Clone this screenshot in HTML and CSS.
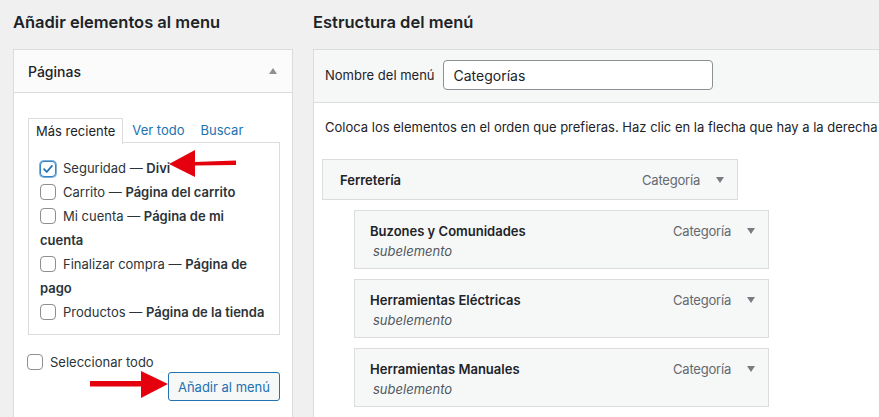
FILE: index.html
```html
<!DOCTYPE html>
<html lang="es">
<head>
    <meta charset="UTF-8">
    <meta name="viewport" content="width=device-width, initial-scale=1.0">
    <title>Menús</title>
    <link rel="stylesheet" href="styles.css">
</head>
<body>
    <div class="layout">
        <!-- columna izquierda -->
        <section class="col-left">
            <h2 class="col-title">Añadir elementos al menu</h2>
            <div class="box">
                <div class="box-head">
                    <h3>Páginas</h3>
                    <span class="caret-up"></span>
                </div>
                <div class="box-body">
                    <ul class="tabs">
                        <li class="tab active">Más reciente</li>
                        <li class="tab"><a href="#">Ver todo</a></li>
                        <li class="tab"><a href="#">Buscar</a></li>
                    </ul>
                    <div class="tab-panel">
                        <ul class="checklist">
                            <li><span class="cb checked"><svg viewBox="0 0 16 16" width="14" height="14"><path d="M3.5 8.2l3 3.2 6-7" fill="none" stroke="#2271b1" stroke-width="2" stroke-linecap="round" stroke-linejoin="round"/></svg></span>Seguridad — <b>Divi</b></li>
                            <li><span class="cb"></span>Carrito — <b>Página del carrito</b></li>
                            <li><span class="cb"></span>Mi cuenta — <b>Página de mi cuenta</b></li>
                            <li><span class="cb"></span>Finalizar compra — <b>Página de pago</b></li>
                            <li><span class="cb"></span>Productos — <b>Página de la tienda</b></li>
                        </ul>
                    </div>
                    <div class="controls">
                        <div class="select-all"><span class="cb"></span>Seleccionar todo</div>
                        <button class="btn">Añadir al menú</button>
                    </div>
                </div>
            </div>
        </section>

        <!-- columna derecha -->
        <section class="col-right">
            <h2 class="col-title">Estructura del menú</h2>
            <div class="box menu-box">
                <div class="menu-head">
                    <label for="menuName">Nombre del menú</label>
                    <input id="menuName" type="text" value="Categorías">
                </div>
                <div class="menu-body">
                    <p class="hint">Coloca los elementos en el orden que prefieras. Haz clic en la flecha que hay a la derecha del elemento para mostrar más opciones de configuración.</p>
                    <ul class="menu-items">
                        <li class="item">
                            <span class="item-title">Ferretería</span>
                            <span class="item-type">Categoría</span><span class="caret-down"></span>
                        </li>
                        <li class="item sub">
                            <div class="item-main">
                                <span class="item-title">Buzones y Comunidades</span>
                                <span class="item-type">Categoría</span><span class="caret-down"></span>
                            </div>
                            <div class="sub-label">subelemento</div>
                        </li>
                        <li class="item sub">
                            <div class="item-main">
                                <span class="item-title">Herramientas Eléctricas</span>
                                <span class="item-type">Categoría</span><span class="caret-down"></span>
                            </div>
                            <div class="sub-label">subelemento</div>
                        </li>
                        <li class="item sub">
                            <div class="item-main">
                                <span class="item-title">Herramientas Manuales</span>
                                <span class="item-type">Categoría</span><span class="caret-down"></span>
                            </div>
                            <div class="sub-label">subelemento</div>
                        </li>
                    </ul>
                </div>
            </div>
        </section>
    </div>

    <!-- flechas rojas de la captura -->
    <svg class="marks" viewBox="0 0 879 417" width="879" height="417">
        <path d="M236 160.5 L194 162 L194 165.5 L236 165 Z" fill="#e5000d"/>
        <path d="M169 164 L195 150 L195 177 Z" fill="#e5000d"/>
        <rect x="90" y="381" width="55" height="5.5" fill="#e5000d"/>
        <path d="M168 384 L141 371 L141 398 Z" fill="#e5000d"/>
    </svg>
</body>
</html>
```

FILE: styles.css
```css
html, body {
    margin: 0;
    padding: 0;
    height: 100%;
    overflow: hidden;
    background-color: #f0f0f1;
    font-family: 'Inter', 'Liberation Sans', sans-serif;
    font-size: 13px;
    color: #1d2327;
}

.layout {
    display: flex;
    gap: 20px;
    padding: 0 13px;
    width: 1200px;
}

.col-left {
    width: 280px;
    flex: none;
}

.col-right {
    width: 700px;
    flex: none;
}

.col-title {
    margin: 11px 0 16px;
    font-size: 16.5px;
    line-height: 22px;
    font-weight: 600;
}

.box {
    background-color: #fff;
    border: 1px solid #dcdcde;
    height: 420px;
    box-sizing: border-box;
}

/* cabecera de Páginas */
.box-head {
    display: flex;
    justify-content: space-between;
    align-items: center;
    height: 42px;
    padding: 0 15px 0 14px;
    background-color: #fbfbfb;
    border-bottom: 1px solid #dcdcde;
}

.box-head h3 {
    margin: 0;
    font-size: 14px;
    font-weight: 500;
}

.caret-up {
    width: 0;
    height: 0;
    border-left: 4.5px solid transparent;
    border-right: 4.5px solid transparent;
    border-bottom: 6px solid #8c8f94;
}

.box-body {
    padding: 25px 12px 0 14px;
}

.tabs {
    display: flex;
    list-style: none;
    margin: 0;
    padding: 0;
    height: 24px;
}

.tab {
    padding: 0 7px;
    margin-right: 2px;
    line-height: 24px;
}

.tab.active {
    border: 1px solid #dcdcde;
    border-bottom: none;
    background-color: #fff;
    position: relative;
    z-index: 1;
    height: 25px;
    line-height: 24px;
}

.tab a {
    color: #2271b1;
    text-decoration: none;
}

.tab-panel {
    border: 1px solid #dcdcde;
    padding: 13px 12px 10px 11px;
}

.checklist {
    list-style: none;
    margin: 0;
    padding: 0;
    line-height: 24px;
    color: #2c3338;
}

.checklist b {
    font-weight: 600;
}

.cb {
    display: inline-block;
    box-sizing: border-box;
    width: 16px;
    height: 16px;
    border: 1px solid #8c8f94;
    border-radius: 4px;
    background-color: #fff;
    vertical-align: -3px;
    margin-right: 7px;
}

.cb.checked {
    border-color: #3582c4;
    box-shadow: 0 0 0 1px #7eb0d9;
    display: inline-flex;
    align-items: center;
    justify-content: center;
}

.controls {
    display: flex;
    flex-direction: column;
}

.select-all {
    margin-top: 16px;
    line-height: 22px;
    margin-left: -1px;
    color: #2c3338;
}

.btn {
    align-self: flex-end;
    margin-top: -1px;
    height: 29px;
    padding: 0 9px;
    font-family: inherit;
    font-size: 13px;
    color: #2271b1;
    background-color: #f6f7f7;
    border: 1px solid #2271b1;
    border-radius: 3px;
}

/* estructura del menú */
.menu-head {
    display: flex;
    align-items: center;
    padding: 10px 11px 12px;
    background-color: #f6f7f7;
    border-bottom: 1px solid #dcdcde;
}

.menu-head label {
    margin-right: 8px;
}

.menu-head input {
    width: 270px;
    height: 30px;
    box-sizing: border-box;
    padding: 0 10px;
    border: 1px solid #8c8f94;
    border-radius: 4px;
    font-family: inherit;
    font-size: 14px;
    color: #1d2327;
}

.menu-body {
    padding: 14px 0 0 8px;
}

.hint {
    margin: 0 0 22px 3px;
    line-height: 20px;
    white-space: nowrap;
}

.menu-items {
    list-style: none;
    margin: 0;
    padding: 0;
    display: flex;
    flex-direction: column;
    gap: 10px;
}

.item {
    display: flex;
    align-items: center;
    width: 416px;
    height: 41px;
    box-sizing: border-box;
    padding: 0 13px 0 17px;
    background-color: #f6f7f7;
    border: 1px solid #dcdcde;
}

.item.sub {
    flex-direction: column;
    align-items: stretch;
    justify-content: flex-start;
    margin-left: 32px;
    width: 415px;
    height: 59px;
    padding: 10px 13px 0 15px;
}

.item-main {
    display: flex;
    align-items: center;
    line-height: 20px;
}

.item-title {
    flex: 1;
    font-weight: 600;
}

.item-type {
    color: #646970;
    letter-spacing: -0.2px;
}

.caret-down {
    margin-left: 16px;
    width: 0;
    height: 0;
    border-left: 4.5px solid transparent;
    border-right: 4.5px solid transparent;
    border-top: 6px solid #787c82;
}

.sub-label {
    margin-left: 3px;
    line-height: 20px;
    font-style: italic;
    color: #50575e;
}

.marks {
    position: absolute;
    top: 0;
    left: 0;
    pointer-events: none;
}
```
